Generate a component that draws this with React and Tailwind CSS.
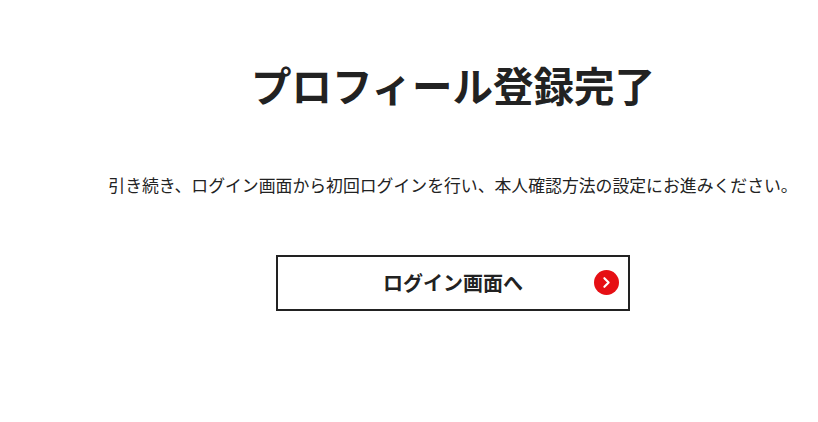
import { ChevronRight } from 'lucide-react'

export default function App() {
  return (
    <div className="w-[818px] h-[422px] bg-white text-[#222] overflow-hidden font-['Noto_Sans_CJK_JP',sans-serif]">
      <div className="flex flex-col items-center w-[906px] pt-[57px]">
        <h1 className="text-[40.5px] leading-[56px] font-bold">プロフィール登録完了</h1>
        <p className="mt-[60px] text-[16.85px] leading-[24px] whitespace-nowrap">
          引き続き、ログイン画面から初回ログインを行い、本人確認方法の設定にお進みください。
        </p>
        <button className="relative mt-[58px] w-[354px] h-[56px] border-2 border-[#222] bg-white flex items-center justify-center text-[20px] font-bold">
          ログイン画面へ
          <span className="absolute right-[9px] top-[13px] w-[25px] h-[25px] rounded-full bg-[#e60f14] flex items-center justify-center">
            <ChevronRight size={17} strokeWidth={3} className="text-white" />
          </span>
        </button>
      </div>
    </div>
  )
}
